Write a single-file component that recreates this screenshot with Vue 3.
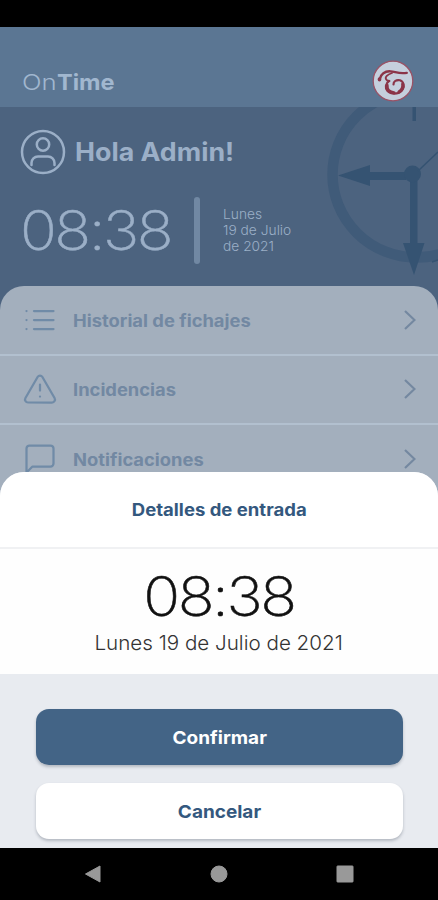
<template>
  <div class="screen">
    <div class="status-bar"></div>

    <header class="header">
      <h1 class="brand"><span>On</span><b>Time</b></h1>
      <svg class="logo" viewBox="0 0 42 42">
        <circle cx="21" cy="21" r="19.8" fill="#c5cfdd" stroke="#995266" stroke-width="1.3" />
        <g fill="none" stroke="#8b3448" stroke-linecap="round">
          <path d="M7.8 19C8.5 14.5 13 10.8 18.5 11.3C24 12 28 14.2 34.8 12.8" stroke-width="2.3" />
          <path d="M7.5 19v.8" stroke-width="3.6" />
          <path d="M20 13C15.5 14.5 12.5 17 14.2 19.5C15 20.8 16.5 21 17.5 21" stroke-width="1.8" />
          <path d="M17 21C13.5 23.5 12.8 28 15.5 31C19 34.6 26 34.6 29.5 31C33 27.5 32 21.5 28 20.3C24.5 19.4 21.3 21.5 21.5 24.5" stroke-width="2.2" />
          <path d="M15 25C14.8 29.5 18 32.5 22 32.8M30.7 24C31.3 27 30 30 27 31.8" stroke-width="3.2" />
        </g>
      </svg>
    </header>

    <main class="content">
      <section class="hero">
        <svg class="clock" viewBox="0 0 118 180">
          <ellipse cx="96.5" cy="67.5" rx="84" ry="83" fill="none" stroke="#405b79" stroke-width="10.5" />
          <g fill="#355372">
            <path d="M92.5 0h3.5v14h-3.5z" />
            <path d="M18 68.5L50 58v7h36v8H50v6z" />
            <path d="M90 70h7.5v66h7L94 168L83 136h7z" />
            <circle cx="92.5" cy="67" r="8.5" />
          </g>
          <path d="M98 64L118 45M112 155L118 153" stroke="#355372" stroke-width="1.6" />
        </svg>
        <div class="user">
          <svg class="avatar" viewBox="0 0 46 46" fill="none" stroke="#9bafc7" stroke-width="2.5">
            <circle cx="23" cy="23" r="21" />
            <circle cx="23" cy="15.5" r="6.2" />
            <path d="M11.5 36V34a6.5 6.5 0 0 1 6.5-6.5h10a6.5 6.5 0 0 1 6.5 6.5v2" stroke-linecap="round" />
          </svg>
          <h2 class="greeting">Hola Admin!</h2>
        </div>
        <div class="now">
          <span class="time">{{ time }}</span>
          <span class="separator"></span>
          <p class="date">Lunes<br />19 de Julio<br />de 2021</p>
        </div>
      </section>

      <ul class="menu">
        <li v-for="item in menu" :key="item.label" class="menu-item">
          <svg class="menu-icon" viewBox="0 0 24 24">
            <path :d="item.icon" />
          </svg>
          <span class="menu-label">{{ item.label }}</span>
          <svg class="chevron" viewBox="0 0 12 20">
            <path d="M1 1l9.5 9L1 19" />
          </svg>
        </li>
      </ul>

      <div class="modal">
        <div class="modal-header"><span>Detalles de entrada</span></div>
        <div class="modal-body">
          <span class="time">{{ time }}</span>
          <p class="modal-date">Lunes 19 de Julio de 2021</p>
        </div>
        <div class="modal-actions">
          <button class="btn btn-primary"><span>Confirmar</span></button>
          <button class="btn"><span>Cancelar</span></button>
        </div>
      </div>
    </main>

    <nav class="nav-bar">
      <svg viewBox="0 0 18 18"><path d="M16 1v16L1.5 9z" stroke-linejoin="round" /></svg>
      <svg viewBox="0 0 18 18"><circle cx="9" cy="9" r="8" /></svg>
      <svg viewBox="0 0 18 18"><rect x="1" y="1" width="16" height="16" rx="0.5" /></svg>
    </nav>
  </div>
</template>

<script setup>
import { ref } from 'vue';

const time = ref('08:38');

const menu = [
    {
        label: 'Historial de fichajes',
        icon: 'M8 6H21M8 12H21M8 18H21M3 6h.01M3 12h.01M3 18h.01'
    },
    {
        label: 'Incidencias',
        icon: 'M10.5 3.86L2.3 18a2 2 0 0 0 1.71 3h15.98a2 2 0 0 0 1.71-3L13.5 3.86a1.75 1.75 0 0 0-3 0zM12 9v4M12 17h.01'
    },
    {
        label: 'Notificaciones',
        icon: 'M21 15a2 2 0 0 1-2 2H7l-4 4V5a2 2 0 0 1 2-2h14a2 2 0 0 1 2 2z'
    }
];
</script>

<style>
body {
    margin: 0;
    background: #000;
}
</style>

<style scoped>
.screen {
    display: flex;
    flex-direction: column;
    height: 900px;
    overflow: hidden;
    background: #000;
    font-family: Inter, "Liberation Sans", sans-serif;
}

.status-bar {
    height: 27px;
}

.header {
    display: flex;
    align-items: center;
    justify-content: space-between;
    height: 80px;
    box-sizing: border-box;
    padding: 29px 24px 0 22px;
    background: #5b7693;
}

.brand {
    display: flex;
    margin: 0;
    font-size: 22px;
    font-weight: 300;
    color: #a1b7cf;
}

.brand span {
    width: 34.5px;
    transform: scaleX(1.17);
    transform-origin: left;
}

.brand b {
    font-weight: 700;
    transform: scaleX(1.07);
    transform-origin: left;
}

.logo {
    width: 42px;
    height: 42px;
    margin-top: -2px;
}

.content {
    position: relative;
    height: 741px;
    overflow: hidden;
    background: #4c637f;
}

.hero {
    position: relative;
    height: 179px;
    box-sizing: border-box;
    padding: 22px 20px 0;
    color: #9bafc7;
}

.clock {
    position: absolute;
    top: 0;
    right: 0;
    width: 118px;
    height: 180px;
}

.user {
    display: flex;
    align-items: center;
    gap: 9px;
}

.avatar {
    width: 46px;
    height: 46px;
}

.greeting {
    margin: 0;
    font-size: 25px;
    font-weight: 700;
    transform: scaleX(1.07);
    transform-origin: left;
}

.now {
    display: flex;
    align-items: center;
    height: 68px;
    margin-top: 21px;
}

.time {
    font-size: 54px;
    line-height: 60px;
    font-weight: 200;
    letter-spacing: -2.2px;
    -webkit-text-stroke: 0.5px currentColor;
    transform: scaleX(1.13);
}

.now .time {
    width: 174px;
    padding-top: 1px;
    transform-origin: left;
}

.separator {
    width: 6px;
    height: 67px;
    border-radius: 3px;
    background: #7188a3;
}

.date {
    margin: 0 0 0 23px;
    font-size: 13.5px;
    line-height: 16px;
    font-weight: 300;
    transform: scaleX(1.02);
    transform-origin: left;
}

.menu {
    margin: 0;
    padding: 0;
    height: 240px;
    list-style: none;
    border-radius: 24px 24px 0 0;
    background: #a3afbd;
}

.menu-item {
    display: flex;
    align-items: center;
    height: 69.5px;
    box-sizing: border-box;
    padding: 0 22px;
    border-bottom: 2px solid #b2c0cf;
}

.menu-icon {
    width: 36px;
    height: 36px;
    margin-right: 15px;
    fill: none;
    stroke: #708ba7;
    stroke-width: 1.5;
    stroke-linecap: round;
    stroke-linejoin: round;
}

.menu-label {
    flex: 1;
    padding-top: 2px;
    font-size: 17px;
    font-weight: 650;
    color: #7288a2;
    transform: scaleX(1.08);
    transform-origin: left;
}

.chevron {
    width: 12px;
    height: 20px;
    fill: none;
    stroke: #7488a0;
    stroke-width: 2.2;
}

.modal {
    position: absolute;
    left: 0;
    right: 0;
    bottom: 0;
    height: 376px;
    overflow: hidden;
    border-radius: 24px 24px 0 0;
    background: #e8ebf0;
}

.modal-header {
    display: flex;
    align-items: center;
    justify-content: center;
    height: 77px;
    box-sizing: border-box;
    padding-top: 1px;
    border-bottom: 2px solid #f0f1f3;
    background: #fff;
    font-size: 17px;
    font-weight: 650;
    color: #34587e;
}

.modal-header span {
    transform: scaleX(1.09);
}

.modal-body {
    display: flex;
    flex-direction: column;
    align-items: center;
    height: 125px;
    box-sizing: border-box;
    padding-top: 18px;
    background: #fefefe;
    color: #111;
}

.modal-date {
    margin: 2px 0 0;
    font-size: 20px;
    line-height: 28px;
    font-weight: 300;
    color: #333;
    transform: scaleX(1.03);
}

.modal-actions {
    display: flex;
    flex-direction: column;
    gap: 18px;
    padding: 35px 35px 0 36px;
}

.btn {
    height: 56px;
    border: 0;
    border-radius: 13px;
    background: #fff;
    box-shadow: 0 2px 3px rgba(60, 70, 85, 0.3);
    font-family: inherit;
    font-size: 18px;
    font-weight: 700;
    color: #34587e;
}

.btn span {
    display: inline-block;
    padding-top: 1px;
    transform: scaleX(1.055);
}

.btn-primary {
    background: #436486;
    color: #fff;
}

.nav-bar {
    display: flex;
    align-items: center;
    justify-content: space-between;
    height: 52px;
    padding: 0 84px;
}

.nav-bar svg {
    width: 18px;
    height: 18px;
    fill: #999;
    stroke: #999;
}
</style>
